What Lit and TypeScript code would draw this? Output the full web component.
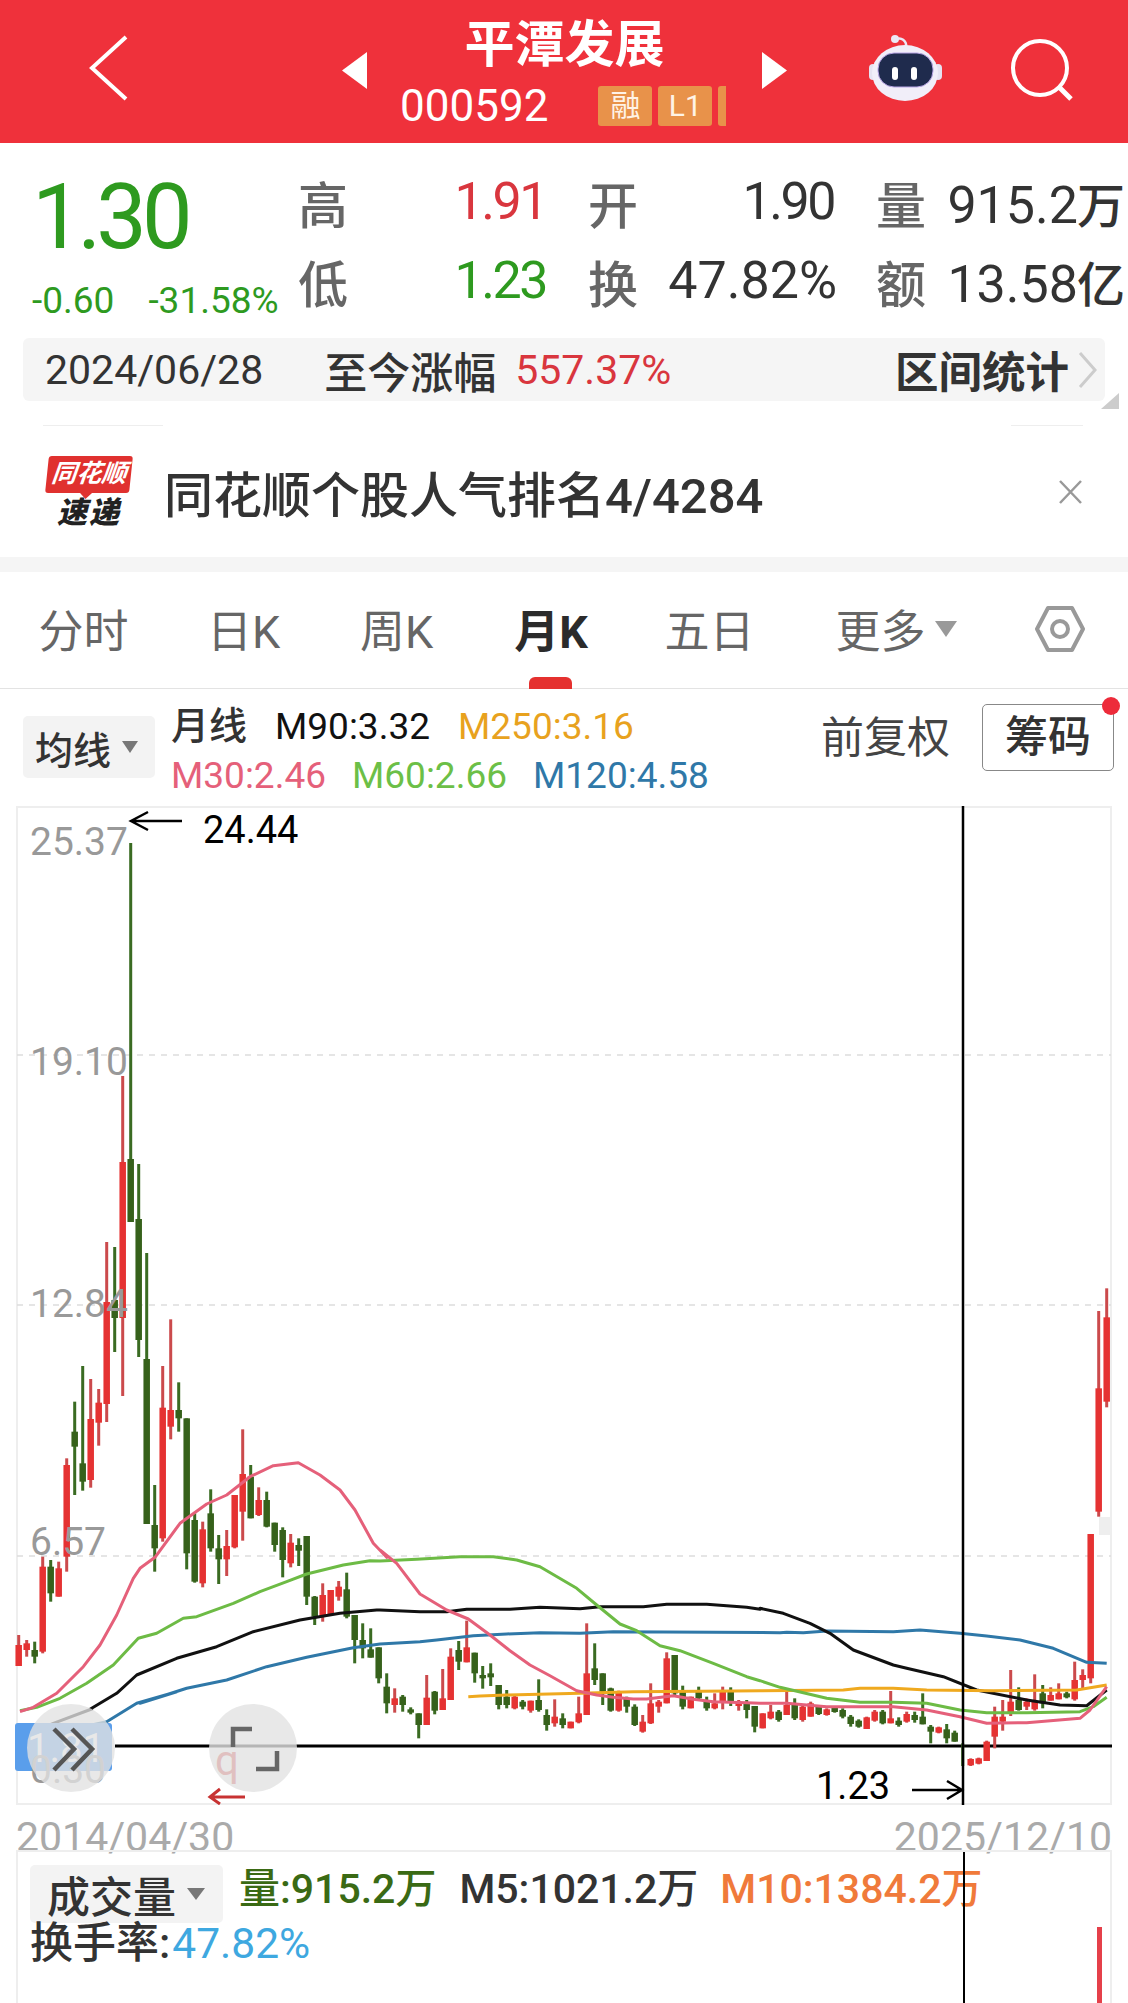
import { LitElement, html, css, svg } from 'lit';
import { customElement } from 'lit/decorators.js';

type Candle = { i: number; up: boolean; wt: number; bt: number; bb: number; wb: number };
type Row = [string, number, number, number, number];

const candles: Candle[] = [];

// rows were read off 3x crops, so y = base + v / div
function addCandles(base: number, div: number, rows: Row[]) {
  rows.forEach(([c, wt, bt, bb, wb]) => {
    candles.push({
      i: candles.length,
      up: c === 'r',
      wt: base + wt / div,
      bt: base + bt / div,
      bb: base + bb / div,
      wb: base + wb / div,
    });
  });
}

addCandles(1300, 3, [
  ['r', 1005, 1035, 1098, 1098], ['r', 1020, 1030, 1050, 1070], ['g', 1025, 1050, 1070, 1090],
  ['r', 770, 800, 1055, 1060], ['g', 780, 800, 880, 905], ['r', 785, 805, 890, 890],
  ['r', 475, 495, 770, 815], ['g', 305, 395, 440, 585], ['g', 198, 490, 545, 572],
  ['r', 237, 357, 540, 563], ['r', 267, 308, 368, 437],
]);
addCandles(0, 1, [
  ['r', 1242, 1302, 1404, 1422], ['g', 1247, 1300, 1318, 1352], ['r', 1076, 1162, 1318, 1396],
  ['g', 843, 1159, 1222, 1222], ['g', 1164, 1219, 1340, 1357], ['g', 1253, 1359, 1524, 1524],
]);
addCandles(1300, 3, [
  ['g', 555, 675, 745, 815], ['r', 198, 323, 715, 725], ['r', 58, 330, 380, 418],
  ['g', 247, 330, 355, 395], ['g', 355, 355, 760, 808], ['g', 640, 660, 845, 848],
  ['r', 665, 688, 850, 862], ['g', 568, 640, 745, 755], ['g', 705, 745, 778, 852],
  ['r', 690, 738, 778, 828], ['r', 585, 585, 742, 745], ['r', 388, 522, 635, 722],
  ['g', 495, 530, 655, 655], ['r', 562, 600, 645, 648], ['g', 575, 600, 680, 682],
  ['g', 668, 668, 735, 755], ['g', 682, 690, 780, 832], ['r', 702, 728, 790, 802],
  ['g', 715, 735, 752, 798], ['g', 708, 708, 890, 915], ['g', 888, 890, 950, 975],
  ['r', 850, 885, 950, 965], ['r', 870, 870, 945, 948], ['r', 843, 860, 890, 902],
  ['g', 818, 868, 950, 955],
]);
addCandles(1590, 3, [
  ['g', 75, 75, 150, 220], ['g', 100, 150, 175, 205], ['g', 115, 178, 203, 203],
  ['g', 172, 172, 265, 280], ['g', 250, 290, 340, 370], ['r', 295, 325, 345, 368],
  ['g', 315, 320, 345, 365], ['g', 352, 358, 368, 373], ['g', 370, 370, 405, 445],
  ['r', 255, 323, 405, 405], ['g', 303, 305, 362, 373], ['r', 237, 325, 360, 360],
  ['r', 175, 200, 330, 330], ['g', 153, 180, 215, 240], ['r', 92, 172, 217, 217],
  ['g', 188, 188, 250, 278], ['g', 228, 255, 265, 296], ['g', 220, 250, 262, 288],
  ['g', 285, 285, 345, 358], ['g', 300, 320, 345, 355], ['r', 315, 320, 355, 358],
  ['g', 330, 335, 350, 358], ['r', 332, 332, 362, 368], ['g', 268, 330, 360, 365],
  ['g', 358, 375, 405, 422], ['r', 328, 380, 400, 410], ['g', 370, 385, 405, 415],
  ['r', 395, 395, 415, 415], ['r', 320, 370, 397, 400], ['r', 100, 250, 375, 375],
  ['g', 160, 235, 270, 285], ['g', 250, 250, 305, 345], ['g', 293, 295, 362, 365],
  ['r', 302, 305, 362, 365], ['g', 320, 325, 350, 368], ['g', 343, 350, 405, 408],
  ['r', 375, 395, 425, 428], ['r', 280, 340, 400, 402], ['r', 330, 335, 350, 368],
  ['r', 187, 205, 340, 340],
]);
addCandles(1500, 3, [
  ['g', 465, 465, 580, 590], ['g', 557, 575, 620, 628], ['r', 590, 590, 625, 625],
  ['g', 560, 575, 595, 603], ['g', 590, 600, 625, 632], ['r', 580, 610, 625, 628],
  ['r', 560, 570, 605, 628], ['g', 562, 575, 605, 618], ['r', 600, 605, 618, 632],
  ['g', 600, 610, 630, 655], ['g', 618, 618, 680, 697], ['r', 640, 640, 685, 685],
  ['r', 615, 635, 655, 658],
]);
addCandles(1260, 3, [
  ['g', 1350, 1355, 1380, 1385], ['r', 1295, 1335, 1365, 1365], ['g', 1315, 1330, 1375, 1380],
  ['r', 1335, 1340, 1380, 1385], ['r', 1325, 1330, 1370, 1370], ['g', 1335, 1340, 1362, 1365],
  ['r', 1345, 1348, 1365, 1367], ['g', 1340, 1342, 1356, 1358], ['g', 1345, 1350, 1370, 1375],
  ['g', 1365, 1370, 1392, 1400], ['g', 1378, 1382, 1400, 1403], ['r', 1370, 1372, 1407, 1407],
  ['r', 1350, 1355, 1382, 1385], ['g', 1350, 1355, 1390, 1393], ['r', 1293, 1375, 1390, 1390],
  ['g', 1372, 1382, 1395, 1400], ['r', 1355, 1362, 1385, 1388], ['g', 1355, 1365, 1380, 1388],
  ['g', 1300, 1370, 1393, 1393], ['g', 1395, 1400, 1415, 1450], ['r', 1400, 1402, 1418, 1420],
  ['g', 1392, 1408, 1435, 1450], ['g', 1412, 1418, 1445, 1445], ['g', 1450, 1450, 1450, 1518],
  ['r', 1495, 1497, 1516, 1518], ['r', 1493, 1495, 1511, 1513], ['r', 1442, 1445, 1503, 1503],
  ['r', 1340, 1370, 1430, 1465], ['r', 1320, 1370, 1385, 1412], ['r', 1230, 1325, 1358, 1368],
  ['g', 1282, 1320, 1350, 1352], ['r', 1315, 1325, 1340, 1350], ['r', 1243, 1325, 1348, 1352],
  ['g', 1275, 1300, 1330, 1345], ['r', 1282, 1305, 1322, 1322], ['r', 1270, 1300, 1318, 1318],
  ['g', 1295, 1300, 1312, 1315], ['r', 1205, 1260, 1318, 1322], ['r', 1228, 1245, 1260, 1285],
  ['r', 822, 822, 1255, 1270], ['r', 153, 385, 755, 770], ['r', 85, 172, 425, 442],
]);

// moving average traces, one list of [x, y] per crop, same 3x coordinates
type Crop = [number, number, number[]];
const crop4 = 0, crop5 = 380, crop6 = 760;

function trace(parts: Crop[]) {
  const pts: string[] = [];
  parts.forEach(([ox, oy, v]) => {
    for (let k = 0; k < v.length; k += 2) {
      pts.push(`${(ox + v[k] / 3).toFixed(1)},${(oy + v[k + 1] / 3).toFixed(1)}`);
    }
  });
  return pts.join(' ');
}

const lines = [
  {
    color: '#2f78a8',
    pts: trace([
      [10, 1690, [30, 133, 100, 125, 200, 115, 290, 95, 380, 40, 500, 5]],
      [crop4, 1300, [420, 1210, 560, 1165, 680, 1140, 800, 1100, 920, 1072, 1060, 1043]],
      [crop5, 1500, [0, 432, 120, 425, 170, 420, 280, 407, 380, 402, 480, 398, 600, 400, 700, 395, 1200, 398]],
      [crop6, 1260, [80, 1117, 130, 1118, 200, 1113, 400, 1115, 480, 1110, 600, 1120, 680, 1128, 780, 1140, 880, 1165, 980, 1207, 1040, 1210]],
    ]),
  },
  {
    color: '#111',
    pts: trace([
      [10, 1690, [60, 130, 130, 100, 245, 57]],
      [crop4, 1300, [270, 1228, 350, 1180, 410, 1125, 530, 1075, 650, 1040, 760, 995, 900, 960, 1020, 940, 1130, 930]],
      [crop5, 1500, [0, 330, 120, 335, 200, 335, 260, 328, 390, 328, 480, 322, 600, 326, 660, 320, 790, 320, 860, 313, 980, 313, 1100, 322, 1140, 328]],
      [crop6, 1260, [0, 1045, 70, 1060, 150, 1090, 210, 1120, 280, 1170, 400, 1215, 440, 1225, 550, 1250, 650, 1290, 800, 1320, 900, 1335, 980, 1337, 1040, 1290]],
    ]),
  },
  {
    color: '#efa91f',
    pts: trace([
      [crop5, 1500, [265, 590, 300, 588, 380, 585, 600, 580, 760, 575, 1060, 573]],
      [crop6, 1260, [0, 1292, 250, 1290, 300, 1285, 400, 1285, 500, 1290, 700, 1292, 950, 1290, 1040, 1275]],
    ]),
  },
  {
    color: '#6dbb45',
    pts: trace([
      [crop4, 1300, [60, 1232, 110, 1222, 180, 1195, 260, 1150, 340, 1095, 415, 1015, 470, 1000, 550, 955, 590, 950, 700, 910, 780, 875, 860, 845, 920, 822, 1030, 795, 1110, 782]],
      [crop5, 1500, [0, 183, 110, 178, 240, 170, 340, 170, 410, 180, 480, 200, 590, 265, 650, 315, 720, 372, 770, 392, 840, 437, 900, 452, 1000, 490, 1100, 530]],
      [crop6, 1260, [0, 1262, 60, 1282, 200, 1315, 300, 1327, 400, 1327, 500, 1330, 600, 1350, 680, 1358, 800, 1358, 960, 1355, 1000, 1340, 1040, 1312]],
    ]),
  },
  {
    color: '#e5607a',
    pts: trace([
      [crop4, 1300, [60, 1235, 100, 1222, 170, 1180, 250, 1100, 300, 1035, 350, 945, 400, 835, 420, 805, 465, 772, 540, 670, 620, 612, 680, 585, 750, 530, 820, 497, 895, 488, 960, 525, 1020, 570, 1065, 630, 1120, 730, 1160, 772]],
      [crop5, 1500, [0, 150, 50, 190, 120, 282, 200, 330, 265, 357, 330, 405, 390, 452, 450, 495, 510, 527, 590, 572, 650, 585, 700, 592, 760, 597, 800, 597, 880, 587, 940, 598, 1000, 605, 1100, 608]],
      [crop6, 1260, [0, 1330, 80, 1330, 200, 1340, 320, 1340, 400, 1340, 500, 1350, 600, 1370, 680, 1390, 800, 1388, 960, 1375, 990, 1350, 1040, 1280]],
    ]),
  },
];

@customElement('app-root')
export class AppRoot extends LitElement {
  static styles = css`
    :host {
      display: block;
      width: 1128px;
      height: 2003px;
      overflow: hidden;
      background: #fff;
      font-family: Roboto, 'Noto Sans CJK SC', sans-serif;
      color: #333;
    }
    svg { display: block; flex: none; }

    .header { display: flex; height: 143px; background: #ef313b; color: #fff; }
    .back { margin: 35px 0 0 89px; }
    .arrow-l { margin: 52px 0 0 213px; }
    .arrow-r { margin-top: 52px; }
    .robot { margin: 33px 0 0 80px; }
    .search { margin: 37px 0 0 66px; }
    .name-col { width: 395px; padding-top: 14px; box-sizing: border-box; }
    .name { height: 62px; line-height: 62px; text-align: center; font-size: 50px; font-weight: 700; }
    .code-row { display: flex; align-items: center; height: 60px; padding-left: 33px; font-size: 44px; }
    .tags { display: flex; gap: 6px; margin-left: 50px; }
    .tag { width: 54px; height: 40px; line-height: 40px; border-radius: 3px; background: #e8924a; color: #fff3e6; font-size: 30px; text-align: center; }
    .tag.clip { width: 8px; border-radius: 3px 0 0 3px; }

    .quote { display: flex; box-sizing: border-box; padding-top: 19px; height: 177px; }
    .price-col { width: 298px; flex: none; padding: 3px 0 0 32px; box-sizing: border-box; }
    .price { height: 106px; line-height: 106px; font-size: 90px; letter-spacing: -5px; color: #2e9a1f; }
    .change { display: flex; gap: 34px; margin-top: 7px; font-size: 37px; line-height: 46px; color: #2e9a1f; }
    .stats { display: grid; grid-template-columns: 50px 198px 92px 199px 89px 199px; grid-auto-rows: 79px; align-items: center; }
    .stats .k { font-size: 50px; font-weight: 500; color: #666; }
    .stats .k.r { text-align: right; }
    .stats .v { font-size: 52px; text-align: right; white-space: nowrap; }
    .stats .v.tight { letter-spacing: -2.5px; }
    .stats .v.inset { padding-right: 3px; }
    .cjk { font-size: 48px; font-weight: 500; margin-left: -1px; }
    .red { color: #d9363e; }
    .green { color: #2e9a1f; }

    .range { position: relative; display: flex; align-items: center; height: 63px; margin: 18px 23px 0; padding-left: 22px; border-radius: 6px; background: #f5f5f5; font-size: 41px; }
    .range .since { margin-left: 61px; font-size: 43px; font-weight: 500; }
    .range .pct { margin-left: 19px; font-size: 41px; color: #d9363e; }
    .range .stat-link { margin-left: auto; font-size: 43.5px; font-weight: 700; }
    .range svg { margin: 0 8px 0 9px; }
    .range::after { content: ''; position: absolute; right: -14px; bottom: -8px; width: 18px; height: 16px; background: #ccc; clip-path: polygon(100% 0, 100% 100%, 0 100%); }

    .hair { display: flex; justify-content: space-between; height: 1px; margin-top: 24px; padding: 0 45px 0 43px; }
    .hair i { display: block; height: 1px; width: 120px; background: #eee; }
    .hair i + i { width: 72px; }

    .news { display: flex; align-items: center; height: 131px; padding-left: 45px; }
    .logo { width: 88px; flex: none; display: flex; flex-direction: column; align-items: center; }
    .bubble { position: relative; width: 84px; height: 37px; line-height: 36px; border-radius: 3px; background: #e0312f; color: #fff; font-size: 25px; font-weight: 700; font-style: italic; text-align: center; transform: skewX(-6deg); white-space: nowrap; }
    .bubble::after { content: ''; position: absolute; left: 35px; bottom: -6px; width: 12px; height: 6px; background: #e0312f; clip-path: polygon(0 0, 100% 0, 50% 100%); }
    .express { height: 30px; margin-top: 5px; line-height: 30px; font-size: 30px; font-weight: 900; font-style: italic; color: #222; letter-spacing: 2px; }
    .news-text { margin-left: 31px; font-size: 49px; font-weight: 500; color: #333; white-space: nowrap; }
    .close { margin: 0 45px 0 auto; }

    .band { height: 15px; background: #f5f5f5; }

    .tabs { position: relative; display: grid; grid-template-columns: 167px 153px 153px 156px 161px 212px 116px; align-items: center; height: 116px; border-bottom: 1px solid #e3e3e3; font-size: 45px; color: #666; }
    .tab { display: flex; justify-content: center; align-items: center; margin-top: -3px; }
    .tab.on { color: #2b2b2b; font-weight: 700; }
    .tab svg { margin-left: 9px; }
    .mark { position: absolute; left: 529px; bottom: -1px; width: 43px; height: 12px; border-radius: 6px 6px 0 0; background: #e5312f; }
    .gear { justify-self: center; margin-top: -3px; }

    .ma { display: flex; height: 117px; padding-left: 23px; }
    .dd { display: flex; align-items: center; height: 62px; background: #f3f3f3; border-radius: 5px; }
    .dd.ma-dd { width: 132px; margin-top: 27px; padding-left: 12px; box-sizing: border-box; font-size: 38px; font-weight: 500; }
    .dd svg { margin-left: 11px; }
    .legend { margin-left: 16px; padding-top: 13px; font-size: 37px; }
    .legend div { display: flex; gap: 28px; height: 49px; line-height: 49px; white-space: nowrap; }
    .legend div + div { gap: 26px; }
    .legend .title { font-size: 38px; font-weight: 500; }
    .c-m90 { color: #111; }
    .c-m250 { color: #e8a21e; }
    .c-m30 { color: #e5607a; }
    .c-m60 { color: #6cbf47; }
    .c-m120 { color: #2f78a8; }
    .adj { margin: 24px 32px 0 auto; font-size: 43px; line-height: 50px; color: #444; }
    .chips { position: relative; width: 132px; height: 67px; margin: 15px 14px 0 0; box-sizing: border-box; border: 1.5px solid #888; border-radius: 5px; text-align: center; font-size: 43px; font-weight: 500; line-height: 64px; }
    .chips::after { content: ''; position: absolute; right: -7px; top: -8px; width: 18px; height: 18px; border-radius: 50%; background: #ed2b3a; }

    .chart-text { font-size: 39px; fill: #999; }
    .chart-mark { font-size: 38px; fill: #000; }

    .dates { display: flex; justify-content: space-between; height: 45px; padding: 11px 16px 0; box-sizing: border-box; font-size: 41px; line-height: 42px; color: #aaa; }
    .vol { position: relative; height: 153px; margin: 0 16px; padding: 13px 0 0 12px; box-sizing: border-box; border: solid #eee; border-width: 2px 2px 0; font-size: 41px; }
    .vol-top { display: flex; align-items: flex-start; }
    .dd.vol-dd { width: 193px; height: 58px; padding-left: 17px; box-sizing: border-box; font-size: 43px; font-weight: 500; }
    .vol-vals { display: flex; margin-left: 16px; height: 48px; line-height: 48px; font-weight: 500; white-space: nowrap; }
    .v1 { color: #3a6a14; }
    .v2 { margin-left: 23px; color: #333; }
    .v3 { margin-left: 22px; color: #f07a3a; }
    .turn { height: 40px; line-height: 40px; font-size: 43px; font-weight: 500; white-space: nowrap; }
    .turn span { margin-left: 2px; color: #3ea8e0; font-size: 42.5px; font-weight: 400; }
    .cross { position: absolute; left: 945px; top: 0; bottom: 0; width: 2px; background: #000; }
    .vol-bar { position: absolute; left: 1079px; top: 75px; bottom: 0; width: 5px; background: #e5404a; }
  `;

  private renderCandles() {
    return candles.map(c => {
      const x = 18.7 + 8 * c.i;
      const body = c.up ? '#e53232' : '#36611b';
      const wick = c.up ? '#cb4a4c' : '#3a6b22';
      return svg`
        <rect x=${x - 1.5} y=${c.wt} width="3" height=${Math.max(c.wb - c.wt, 0)} fill=${wick}></rect>
        <rect x=${x - 3.25} y=${c.bt} width="6.5" height=${Math.max(c.bb - c.bt, 0)} fill=${body}></rect>
      `;
    });
  }

  private renderChart() {
    return html`
      <svg width="1128" height="999" viewBox="0 806 1128 999">
        <rect x="17" y="807" width="1094" height="997" fill="#fff" stroke="#eee" stroke-width="2"></rect>
        ${[1055, 1305, 1556].map(y => svg`
          <line x1="17" x2="1111" y1=${y} y2=${y} stroke="#ddd" stroke-width="1.5" stroke-dasharray="6 6"></line>
        `)}
        <rect x="1099" y="1517" width="13" height="18" fill="#eee"></rect>
        <line x1="115" x2="1112" y1="1746" y2="1746" stroke="#000" stroke-width="3"></line>
        ${this.renderCandles()}
        ${lines.map(l => svg`
          <polyline points=${l.pts} fill="none" stroke=${l.color} stroke-width="3" stroke-linejoin="round"></polyline>
        `)}
        <text class="chart-text" x="30" y="855">25.37</text>
        <text class="chart-text" x="30" y="1075">19.10</text>
        <text class="chart-text" x="30" y="1317">12.84</text>
        <text class="chart-text" x="30" y="1555">6.57</text>

        <path d="M182 821H132M148 812L131 821L148 830" fill="none" stroke="#000" stroke-width="2.5"></path>
        <text class="chart-mark" x="203" y="843">24.44</text>
        <text class="chart-mark" x="816" y="1799">1.23</text>
        <path d="M912 1790H961M947 1781L962 1790L947 1799" fill="none" stroke="#000" stroke-width="2.5"></path>
        <line x1="963" x2="963" y1="806" y2="1805" stroke="#000" stroke-width="2.5"></line>

        <rect x="15" y="1723" width="97" height="48" rx="3" fill="#5a9eeb"></rect>
        <text x="27" y="1762" font-size="40" fill="#fff">1.81</text>
        <text class="chart-text" x="30" y="1783">0.30</text>
        <circle cx="71" cy="1748" r="44" fill="#e2e2e2" fill-opacity="0.78"></circle>
        <path d="M54 1729L74 1749L54 1770M72 1729L92 1749L72 1770" fill="none" stroke="#555" stroke-width="4.5"></path>

        <text x="215" y="1775" font-size="42" fill="#d63a3a">q</text>
        <path d="M245 1797H211M220 1789L210 1797L220 1804" fill="none" stroke="#c83232" stroke-width="3"></path>
        <circle cx="253" cy="1748" r="44" fill="#e2e2e2" fill-opacity="0.8"></circle>
        <path d="M233 1747V1729H252M277 1751V1769H256" fill="none" stroke="#666" stroke-width="4.5"></path>
      </svg>
    `;
  }

  render() {
    return html`
      <div class="header">
        <svg class="back" width="40" height="68" viewBox="0 0 40 68"><path d="M37 2L3 33L37 64" fill="none" stroke="#fff" stroke-width="4"></path></svg>
        <svg class="arrow-l" width="25" height="37" viewBox="0 0 25 37"><path d="M25 0V37L0 18.5Z" fill="#fff"></path></svg>
        <div class="name-col">
          <div class="name">平潭发展</div>
          <div class="code-row">
            <span>000592</span>
            <div class="tags">
              <div class="tag">融</div>
              <div class="tag">L1</div>
              <div class="tag clip"></div>
            </div>
          </div>
        </div>
        <svg class="arrow-r" width="25" height="37" viewBox="0 0 25 37"><path d="M0 0V37L25 18.5Z" fill="#fff"></path></svg>
        <svg class="robot" width="76" height="70" viewBox="866 33 76 70">
          <path d="M894 40C900 36 906 41 905 47" fill="none" stroke="#ece8f6" stroke-width="2.5"></path>
          <circle cx="894" cy="39" r="4" fill="#ece8f6"></circle>
          <rect x="868" y="64" width="8" height="16" rx="4" fill="#e6e3f2"></rect>
          <rect x="933" y="64" width="8" height="16" rx="4" fill="#e6e3f2"></rect>
          <ellipse cx="904" cy="73" rx="33" ry="28" fill="#f1eef9"></ellipse>
          <rect x="877" y="53" width="55" height="34" rx="16" fill="#1f2b4d" stroke="#b9a6e6" stroke-width="1"></rect>
          <rect x="891" y="67" width="6" height="13" rx="3" fill="#fff"></rect>
          <rect x="910" y="67" width="6" height="13" rx="3" fill="#fff"></rect>
        </svg>
        <svg class="search" width="66" height="66" viewBox="0 0 66 66">
          <circle cx="31" cy="31" r="27" fill="none" stroke="#fff" stroke-width="4"></circle>
          <path d="M50 50L62 62" stroke="#fff" stroke-width="5"></path>
        </svg>
      </div>

      <div class="quote">
        <div class="price-col">
          <div class="price">1.30</div>
          <div class="change"><span>-0.60</span><span>-31.58%</span></div>
        </div>
        <div class="stats">
          <span class="k">高</span><span class="v tight red">1.91</span>
          <span class="k r">开</span><span class="v tight inset">1.90</span>
          <span class="k r">量</span><span class="v">915.2<span class="cjk">万</span></span>
          <span class="k">低</span><span class="v tight green">1.23</span>
          <span class="k r">换</span><span class="v">47.82%</span>
          <span class="k r">额</span><span class="v">13.58<span class="cjk">亿</span></span>
        </div>
      </div>

      <div class="range">
        <span>2024/06/28</span>
        <span class="since">至今涨幅</span>
        <span class="pct">557.37%</span>
        <span class="stat-link">区间统计</span>
        <svg width="19" height="36" viewBox="0 0 19 36"><path d="M2 1L17 18L2 35" fill="none" stroke="#ccc" stroke-width="3"></path></svg>
      </div>

      <div class="hair"><i></i><i></i></div>

      <div class="news">
        <div class="logo">
          <div class="bubble">同花顺</div>
          <div class="express">速递</div>
        </div>
        <span class="news-text">同花顺个股人气排名4/4284</span>
        <svg class="close" width="25" height="24" viewBox="0 0 25 24"><path d="M2 1L23 23M23 1L2 23" stroke="#999" stroke-width="2.5"></path></svg>
      </div>

      <div class="band"></div>

      <div class="tabs">
        <div class="tab">分时</div>
        <div class="tab">日K</div>
        <div class="tab">周K</div>
        <div class="tab on">月K</div>
        <div class="tab">五日</div>
        <div class="tab">更多<svg width="22" height="16" viewBox="0 0 22 16"><path d="M0 0H22L11 16Z" fill="#999"></path></svg></div>
        <svg class="gear" width="50" height="48" viewBox="0 0 50 48">
          <path d="M2 24L13 3H37L48 24L37 45H13Z" fill="none" stroke="#999" stroke-width="4" stroke-linejoin="round"></path>
          <circle cx="25" cy="24" r="8" fill="none" stroke="#999" stroke-width="4"></circle>
        </svg>
        <div class="mark"></div>
      </div>

      <div class="ma">
        <div class="dd ma-dd">均线<svg width="16" height="12" viewBox="0 0 16 12"><path d="M0 0H16L8 12Z" fill="#777"></path></svg></div>
        <div class="legend">
          <div><span class="title">月线</span><span class="c-m90">M90:3.32</span><span class="c-m250">M250:3.16</span></div>
          <div><span class="c-m30">M30:2.46</span><span class="c-m60">M60:2.66</span><span class="c-m120">M120:4.58</span></div>
        </div>
        <div class="adj">前复权</div>
        <div class="chips">筹码</div>
      </div>

      ${this.renderChart()}

      <div class="dates"><span>2014/04/30</span><span>2025/12/10</span></div>

      <div class="vol">
        <div class="vol-top">
          <div class="dd vol-dd">成交量<svg width="18" height="12" viewBox="0 0 18 12"><path d="M0 0H18L9 12Z" fill="#777"></path></svg></div>
          <div class="vol-vals">
            <span class="v1">量:915.2万</span>
            <span class="v2">M5:1021.2万</span>
            <span class="v3">M10:1384.2万</span>
          </div>
        </div>
        <div class="turn">换手率:<span>47.82%</span></div>
        <div class="cross"></div>
        <div class="vol-bar"></div>
      </div>
    `;
  }
}
